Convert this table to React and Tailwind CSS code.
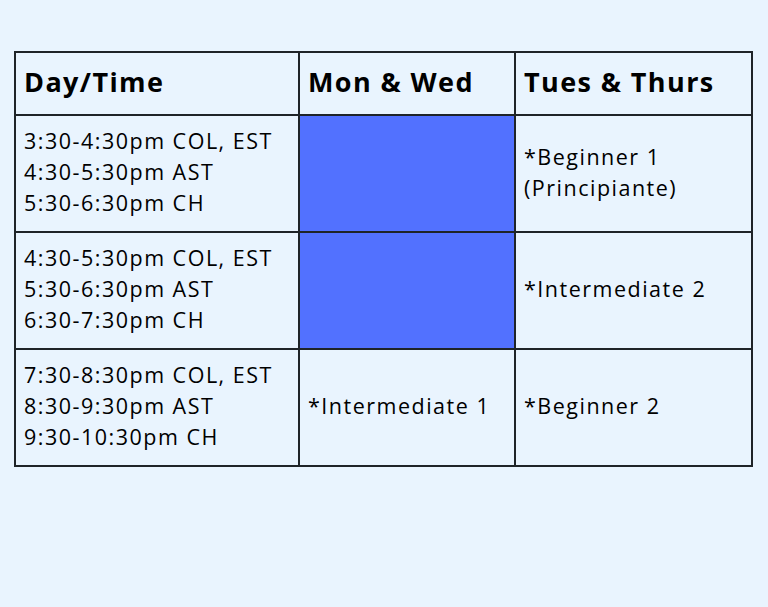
const rows = [
  {
    times: ["3:30-4:30pm COL, EST", "4:30-5:30pm AST", "5:30-6:30pm CH"],
    monWed: null,
    tuesThurs: ["*Beginner 1", "(Principiante)"],
  },
  {
    times: ["4:30-5:30pm COL, EST", "5:30-6:30pm AST", "6:30-7:30pm CH"],
    monWed: null,
    tuesThurs: ["*Intermediate 2"],
  },
  {
    times: ["7:30-8:30pm COL, EST", "8:30-9:30pm AST", "9:30-10:30pm CH"],
    monWed: ["*Intermediate 1"],
    tuesThurs: ["*Beginner 2"],
  },
];

const Lines = ({ lines }) => (
  <div>
    {lines.map((l) => (
      <div key={l}>{l}</div>
    ))}
  </div>
);

export default function App() {
  return (
    <div
      className="w-[768px] h-[607px] bg-[#e9f4fe] pt-[51px] pl-[14px]"
      style={{ fontFamily: '"Open Sans", "Noto Sans", sans-serif' }}
    >
      <table className="border-collapse border-2 border-[#1f2428] text-black table-fixed w-[737px]">
        <colgroup>
          <col className="w-[284px]" />
          <col className="w-[216px]" />
          <col className="w-[237px]" />
        </colgroup>
        <thead>
          <tr className="h-[63px]">
            {["Day/Time", "Mon & Wed", "Tues & Thurs"].map((h) => (
              <th
                key={h}
                className="border-2 border-[#1f2428] text-left align-middle pl-[8px] pb-[2px] text-[27px] font-bold tracking-[1.4px]"
              >
                {h}
              </th>
            ))}
          </tr>
        </thead>
        <tbody>
          {rows.map((r, i) => (
            <tr key={i} className="h-[117px] text-[21.5px] leading-[31px] tracking-[1.5px]">
              <td className="border-2 border-[#1f2428] align-middle pl-[8px] pb-[4px]">
                <Lines lines={r.times} />
              </td>
              {r.monWed ? (
                <td className="border-2 border-[#1f2428] align-middle pl-[8px] pb-[4px]">
                  <Lines lines={r.monWed} />
                </td>
              ) : (
                <td className="border-2 border-[#1f2428] bg-[#5271ff]" />
              )}
              <td className="border-2 border-[#1f2428] align-middle pl-[8px] pb-[4px]">
                <Lines lines={r.tuesThurs} />
              </td>
            </tr>
          ))}
        </tbody>
      </table>
    </div>
  );
}
